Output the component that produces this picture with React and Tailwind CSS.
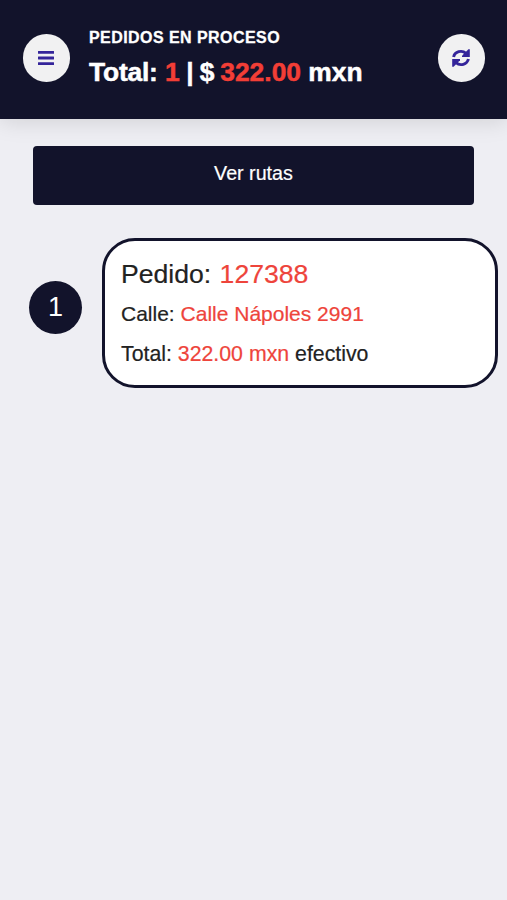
const orders = [
  { id: 127388, street: "Calle Nápoles 2991", total: 322, payment: "efectivo" },
];

const MenuIcon = () => (
  <svg width="16" height="14" viewBox="0 0 16 14" fill="currentColor">
    <rect y="0" width="16" height="2.8" rx="0.3" />
    <rect y="5.6" width="16" height="2.8" rx="0.3" />
    <rect y="11.2" width="16" height="2.8" rx="0.3" />
  </svg>
);

const RefreshIcon = () => (
  <svg width="18" height="18" viewBox="0 0 18 18">
    <g fill="none" stroke="currentColor" strokeWidth="2.9">
      <path d="M1.6 8A7.4 7 0 0 1 14 4.4" />
      <path d="M16.4 10A7.4 7 0 0 1 4 13.6" />
    </g>
    <g fill="currentColor">
      <path d="M17.8 0.2V8H10V6.8L16.4 0.2Z" />
      <path d="M0.2 17.8V10H8V11.2L1.6 17.8Z" />
    </g>
  </svg>
);

const RoundButton = ({ label, children }) => (
  <button
    aria-label={label}
    className="w-[47px] h-[48px] pr-px shrink-0 rounded-full bg-[#f1f1f2] text-[#34249a] flex items-center justify-center"
  >
    {children}
  </button>
);

const Header = ({ count, total }) => (
  <header className="h-[119px] pt-[26px] pl-[23px] pr-[22px] flex items-start bg-[#12132b] text-white shadow-[0_2px_22px_rgba(0,0,0,0.13)]">
    <div className="pt-[8px]">
      <RoundButton label="Menú">
        <MenuIcon />
      </RoundButton>
    </div>
    <div className="flex-1 ml-[19px] font-bold whitespace-nowrap">
      <h1 className="text-[16px] leading-6 tracking-[0.44px] [-webkit-text-stroke:0.3px]">
        PEDIDOS EN PROCESO
      </h1>
      <p className="mt-[4px] text-[26.4px] leading-[36px] [-webkit-text-stroke:0.5px]">
        <span className="tracking-[-0.2px]">Total:</span>{" "}
        <span className="text-[#f23e36]">{count}</span>
        <span className="tracking-[-0.7px]"> | $ </span>
        <span className="text-[#f23e36]">{total.toFixed(2)}</span> mxn
      </p>
    </div>
    <div className="pt-[8px]">
      <RoundButton label="Actualizar">
        <RefreshIcon />
      </RoundButton>
    </div>
  </header>
);

const OrderRow = ({ order, position }) => (
  <div className="flex items-center pl-[29px] pr-[9px]">
    <div className="w-[53px] h-[53px] mr-[20px] mb-[12px] shrink-0 rounded-full bg-[#12132b] text-white text-[27px] flex items-center justify-center">
      {position}
    </div>
    <div className="flex-1 h-[150px] pt-[13px] pl-[16px] rounded-[33px] border-3 border-[#12132b] bg-white text-[#222] whitespace-nowrap [-webkit-text-stroke:0.2px]">
      <p className="text-[26.6px] leading-[40px]">
        Pedido: <span className="ml-px text-[#ee443b]">{order.id}</span>
      </p>
      <p className="text-[21px] leading-[40px]">
        Calle: <span className="text-[#ee443b]">{order.street}</span>
      </p>
      <p className="text-[21.3px] leading-[40px]">
        Total: <span className="text-[#ee443b]">{order.total.toFixed(2)} mxn</span> {order.payment}
      </p>
    </div>
  </div>
);

const App = () => {
  const total = orders.reduce((sum, order) => sum + order.total, 0);

  return (
    <div className="min-h-screen bg-[#eeeef3] font-['Liberation_Sans',Arial,sans-serif]">
      <Header count={orders.length} total={total} />
      <main>
        <div className="pt-[27px] px-[33px]">
          <button className="w-full h-[59px] mb-px pb-[4px] rounded bg-[#12132b] text-white text-[19.7px] [-webkit-text-stroke:0.2px]">
            Ver rutas
          </button>
        </div>
        <div className="mt-[32px]">
          {orders.map((order, i) => (
            <OrderRow key={order.id} order={order} position={i + 1} />
          ))}
        </div>
      </main>
    </div>
  );
};

export default App;
